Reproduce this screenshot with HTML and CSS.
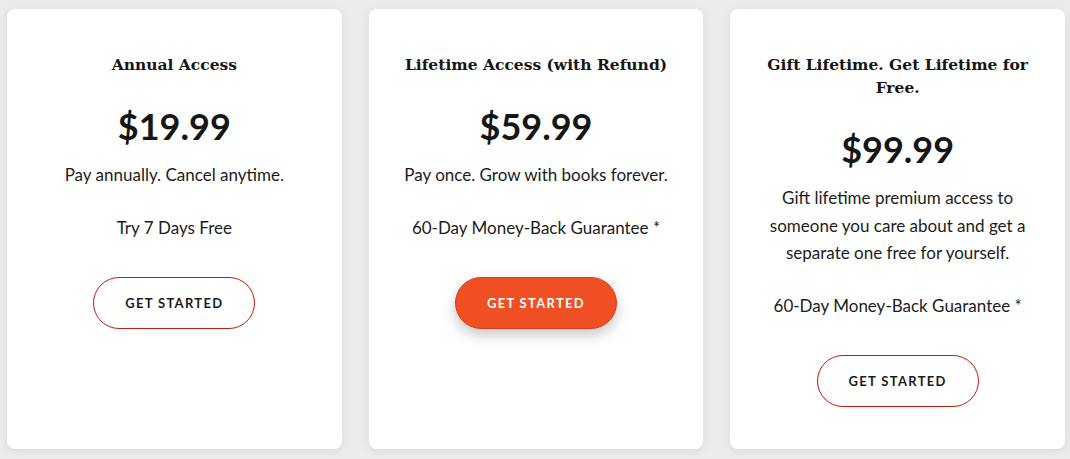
FILE: index.html
```html
<!DOCTYPE html>
<html lang="en">
<head>
    <meta charset="UTF-8">
    <meta name="viewport" content="width=device-width, initial-scale=1.0">
    <title>Pricing</title>
    <link rel="stylesheet" href="styles.css">
</head>
<body>
    <div class="plans">
        <div class="plan">
            <h3>Annual Access</h3>
            <div class="price">$19.99</div>
            <p>Pay annually. Cancel anytime.</p>
            <p>Try 7 Days Free</p>
            <a class="btn" href="#">Get Started</a>
        </div>

        <div class="plan">
            <h3>Lifetime Access (with Refund)</h3>
            <div class="price">$59.99</div>
            <p>Pay once. Grow with books forever.</p>
            <p>60-Day Money-Back Guarantee *</p>
            <a class="btn btn-main" href="#">Get Started</a>
        </div>

        <div class="plan">
            <h3>Gift Lifetime. Get Lifetime for Free.</h3>
            <div class="price">$99.99</div>
            <p>Gift lifetime premium access to someone you care about and get a separate one free for yourself.</p>
            <p>60-Day Money-Back Guarantee *</p>
            <a class="btn" href="#">Get Started</a>
        </div>
    </div>
</body>
</html>
```

FILE: styles.css
```css
body { margin: 0; background: #ececec; font-family: "Lato", "Open Sans", sans-serif; color: #1c1c1c; }
.plans { display: grid; grid-template-columns: repeat(3, 1fr); gap: 27px; padding: 9px 5px 10px 7px; height: 440px; }
.plan { background: #fff; border-radius: 8px; box-shadow: 0 2px 10px rgba(0,0,0,0.08); padding: 44px 24px 0; text-align: center; }
.plan h3 { font-family: "DejaVu Serif", serif; font-size: 15.5px; line-height: 23px; margin: 0; color: #161616; }
.price { font-size: 36px; font-weight: 700; line-height: 44px; margin: 28px 0 13px; color: #161616; }
.plan p { font-size: 17px; line-height: 27.5px; margin: 0 0 25px; }
.btn { display: inline-block; margin-top: 11px; width: 160px; height: 50px; line-height: 50px; border: 1.5px solid #c21d0b; border-radius: 27px; color: #1c1c1c; text-decoration: none; text-transform: uppercase; font-weight: 700; font-size: 13px; letter-spacing: 1.3px; }
.btn-main { background: #f04e23; border-color: #d9401a; color: #fff; box-shadow: 0 6px 14px rgba(0,0,0,0.22); }
```
